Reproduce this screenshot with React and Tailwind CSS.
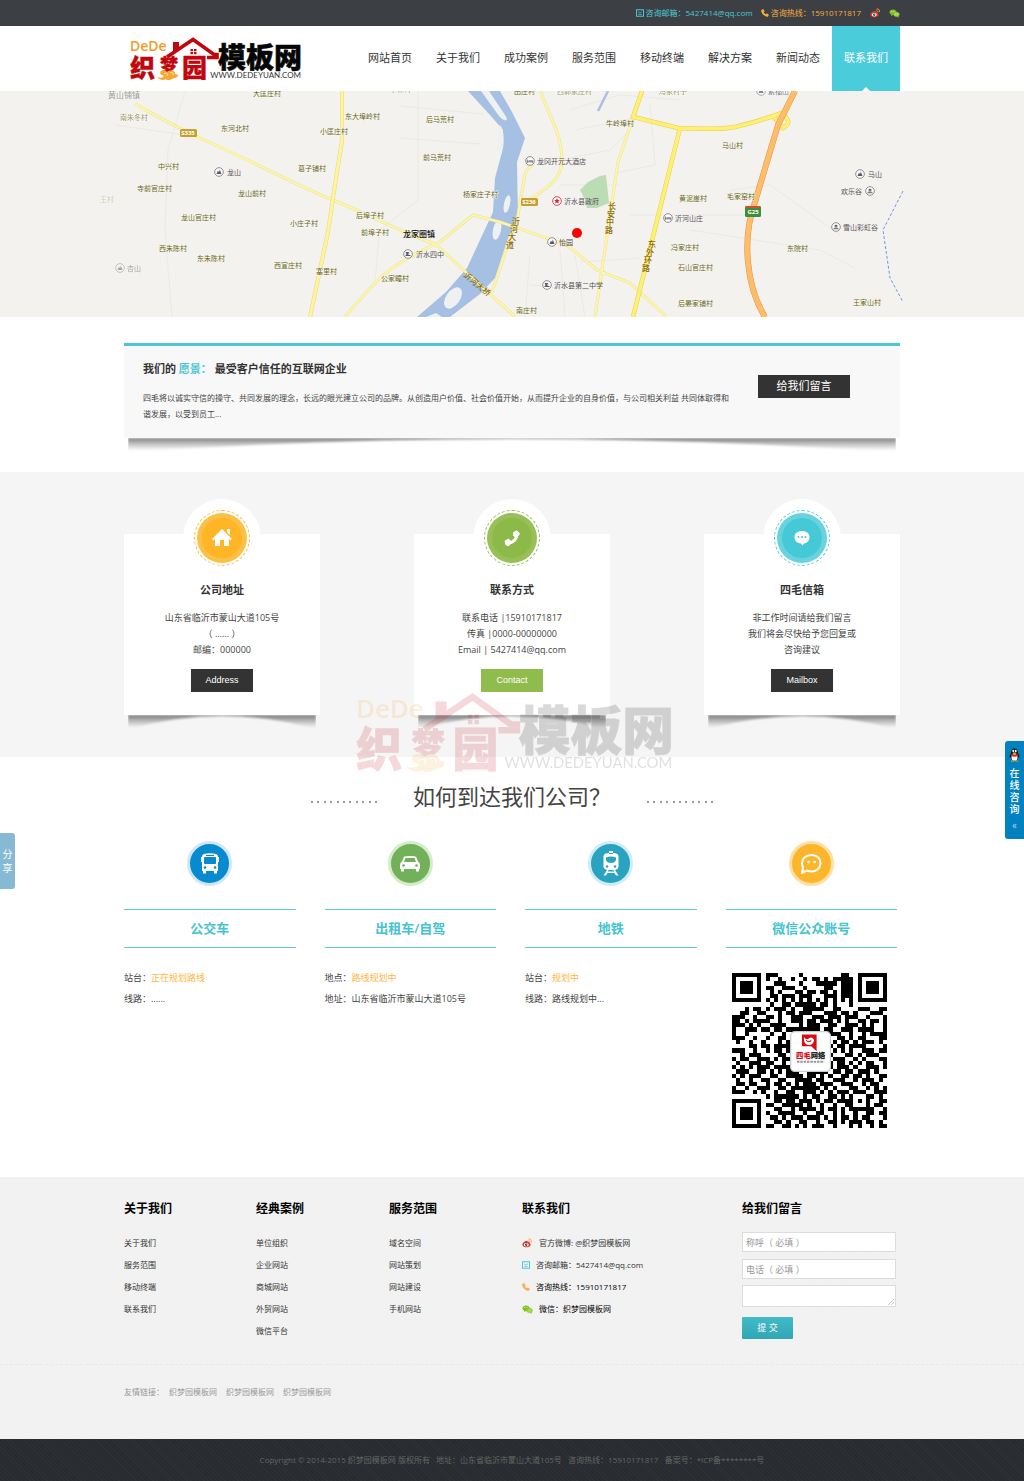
import React from "react";

const NAV = ["网站首页", "关于我们", "成功案例", "服务范围", "移动终端", "解决方案", "新闻动态", "联系我们"];

const QR_ROWS = [
  "1111111011100000100000000011001111111",
  "1000001010010010010110101111101000001",
  "1011101000111000100011111011101011101",
  "1011101011001110010000110011101011101",
  "1011101001010001101101101011101011101",
  "1000001001101110111000111011101000001",
  "1111111010101010101010101010101111111",
  "0000000001001101111101101000100000000",
  "0001011010111010011111001100001110011",
  "0011001100010110111000111011010001110",
  "1110010011010011100111011101110010001",
  "1101011110010011101101110101001101101",
  "1110101001111000101110011001110101001",
  "1001110110110111111110110011101111001",
  "1001000001001000100010111100100101111",
  "1110010010011001111001100110101100011",
  "0100100100010100000000001011010111010",
  "0000110110111100000000110110111100001",
  "1110010010110110000000001010100111011",
  "0010111000011010000000110001101011100",
  "1011001110101100000000101110010100011",
  "0100111011001000000000010110101011001",
  "1010101110111100000000110111010011101",
  "0111001101010111001111101101101110100",
  "1010111001100111101101010011011010011",
  "0100100110011001111011001110010111010",
  "0110110010110101011101110011100101100",
  "1001001110011011111110101000110010101",
  "1110010100100110011101010111011100111",
  "0000000010111111010110011010100011010",
  "1111111000110110111010110111101010011",
  "1000001011001111101001001001100010110",
  "1011101000110010111101011010111111001",
  "1011101010011110010011001010010011011",
  "1011101001101011101110101011010110001",
  "1000001000110100110010011010111011010",
  "1111111011001101010111001000101001011",
];

function Logo({ className }) {
  return (
    <svg className={className} viewBox="0 0 172 44" role="img" aria-label="织梦园模板网">
      <text x="0" y="14" fontSize="14" fontWeight="600" fill="#f39a2b" fontFamily="'Open Sans',sans-serif">DeDe</text>
      <g fill="#c0070d" stroke="#c0070d" strokeWidth=".4" fontFamily="'Noto Sans CJK SC',sans-serif" fontWeight="900">
        <text x="0" y="40" fontSize="25">织</text>
        <text x="30" y="35" fontSize="18">梦</text>
        <text x="52" y="40" fontSize="25">园</text>
      </g>
      <path d="M37 20 63 2.500 84 17.500H87V20.500H77" fill="none" stroke="#c0070d" strokeWidth="3.600" />
      <path d="M43 5h6v6l-6 4zM60.500 12h2.500v2.300h-2.500zm3.500 0h2.500v2.300h-2.500zm-3.500 3h2.500v2.300h-2.500zm3.500 0h2.500v2.300h-2.500z" fill="#c0070d" />
      <path d="M30 38c0-4 5-5 7-2 3-3 9-1 8 2 5 0 3 4-1 4-2 2-8 3-8 1-3 2-6 1-9-2 3 1 6 1 7-1" transform="translate(0 -1)" fill="#f7a82f" />
      <path d="M34 37c2-2 5 0 3 2m3-3c2-1 4 0 3 2" fill="none" stroke="#fff" strokeWidth=".7" />
      <text x="88" y="31" fontSize="28" fontWeight="900" fill="#060606" stroke="#060606" strokeWidth=".5" fontFamily="'Noto Sans CJK SC',sans-serif">模板网</text>
      <text x="171" y="41" textAnchor="end" fontSize="8" fill="#333" fontFamily="Lato,sans-serif">WWW.DEDEYUAN.COM</text>
    </svg>
  );
}

function PhoneIcon({ className }) {
  return (
    <svg className={className} viewBox="0 0 16 16" fill="currentColor" aria-hidden="true">
      <path d="M1 2 3.500.5Q4.500 0 5.200 1L7 4Q7.400 5 6.500 5.700L5.500 6.500Q7 9 9.500 10.500L10.300 9.500Q11 8.600 12 9L15 10.800Q16 11.500 15.500 12.500L14 15Q13 16 11 15.500 3 13 .5 5 0 3 1 2Z" />
    </svg>
  );
}

function MailIcon({ className }) {
  return (
    <svg className={className} viewBox="0 0 16 16" fill="none" stroke="#4bc8d5" strokeWidth="2" aria-hidden="true">
      <rect x="1" y="1.500" width="14" height="13" />
      <path d="M4 5.500 8 8l4-2.500M4.500 11h7" strokeWidth="1.500" />
    </svg>
  );
}

function WeiboIcon({ className }) {
  return (
    <svg className={className} viewBox="0 0 22 22" aria-hidden="true">
      <path d="M13 2c4-1 7 2 6 6M13 5.500c2-.5 3.500 1 3 3" fill="none" stroke="#f5a04a" strokeWidth="1.800" />
      <path d="M8 6c2-1 4 0 3 2 3-1 5 0 4 2 3 1 3 4 1 6-4 4-13 3-15-1-1-4 3-8 7-9z" fill="#dc3a20" />
      <ellipse cx="8.500" cy="13.500" rx="5" ry="3.400" fill="#fff" />
      <circle cx="8.500" cy="13.500" r="2.300" fill="#222" />
      <circle cx="9.500" cy="12.500" r=".8" fill="#fff" />
    </svg>
  );
}

function WechatIcon({ className }) {
  return (
    <svg className={className} viewBox="0 0 22 18" aria-hidden="true">
      <path d="M8 1c4 0 7 2 7 5.500S12 12 8 12l-4 2 .500-3C2 10 1 8.500 1 6.500 1 3 4 1 8 1z" fill="#7dc11d" />
      <path d="M15 6c3.500 0 6 2 6 4.500 0 1.500-1 3-2 3.700l.500 2.800-3-1.700C12 16 9 14 9 10.700 9 8 11.500 6 15 6z" fill="#9ad63b" stroke="#5f9f12" strokeWidth=".5" />
      <g fill="#fff"><circle cx="5.500" cy="5" r="1" /><circle cx="10" cy="5" r="1" /><circle cx="13" cy="10" r=".8" /><circle cx="17" cy="10" r=".8" /></g>
    </svg>
  );
}

const VILLAGES = [
  [253, 96, "大匡庄村"], [120, 120, "南朱冬村", 0.6], [221, 131, "东河北村"], [158, 169, "中兴村"], [137, 191, "寺前官庄村"],
  [238, 196, "龙山前村"], [181, 220, "龙山官庄村"], [159, 251, "西朱陈村"], [197, 261, "东朱陈村"], [345, 119, "东大埠岭村"],
  [320, 134, "小匡庄村"], [298, 171, "葛子铺村"], [290, 226, "小庄子村"], [274, 268, "西宣庄村"], [316, 274, "塞里村"],
  [426, 122, "后马荒村"], [423, 160, "前马荒村"], [463, 197, "杨家庄子村"], [356, 218, "后埠子村"], [361, 235, "前埠子村"],
  [381, 281, "公家疃村"], [514, 94, "田庄村"], [557, 94, "西郭家庄村", 0.6], [659, 94, "冯家村子", 0.6], [606, 126, "牛岭埠村"],
  [722, 148, "马山村"], [679, 201, "黄泥崖村"], [727, 199, "毛家窑村"], [671, 250, "冯家庄村"], [678, 270, "石山官庄村"],
  [787, 251, "东院村"], [678, 306, "后晏家铺村"], [516, 313, "南庄村"], [853, 305, "王家山村"], [390, 92, "小徐村", 0.4], [100, 202, "王村", 0.25],
];

const PLACES = [
  [219, 172, 227, "龙山", "hill"], [408, 254, 416, "沂水四中", "school"], [120, 268, 127, "杏山", "hill", 0.5], [530, 161, 537, "龙冈开元大酒店", "hotel"],
  [668, 218, 675, "沂河山庄", "hotel"], [547, 285, 554, "沂水县第二中学", "school"], [860, 174, 868, "马山", "hill"], [870, 191, 841, "欢乐谷", "sight"],
  [836, 227, 843, "雪山彩虹谷", "sight"], [552, 242, 559, "怡园", "hill"], [761, 91, 768, "紫福山", "hill", 0.7],
];

const PLACE_GLYPHS = {
  hill: "M-2.500 2-1-1.500 0 .3.800-2.500 2.500 2Z",
  school: "M-2.300-2H1.500L0-.3H2L-.5 1H2.500V2H-2.500V1L-.8-.2H-2Z",
  hotel: "M-2.700-1.500V1.800M-2.700.8H2.700V1.800M-1.500-.2H2.700V.8",
  sight: "M0-2.600 2-1H-2ZM-1.500-.7H1.500V.6H-1.500ZM-2.500 1.200H2.500V2.200H-2.500Z",
};

function TownMap() {
  return (
    <svg
      className="block h-[226px] w-full"
      viewBox="0 91 1024 226"
      preserveAspectRatio="xMidYMid slice"
      fontFamily="'Noto Sans CJK SC',sans-serif"
      fontSize="7"
      role="img"
      aria-label="公司位置地图"
    >
      <rect x="0" y="91" width="1024" height="226" fill="#f4f2ee" />
      <g fill="none" stroke="#ebe9e4" strokeWidth="1">
        <path d="M185 91 168 150 165 230 172 317M418 91V200L380 230 375 280M400 106l84 8M400 138l80 6M115 125l70 10 M570 110l50-15 60 5M575 130l60-12M560 160l50-10 20-20M560 185h60M580 262l60-4M630 215h120M690 230l130 20 35 18M530 255l-5 62M560 250l5 67M575 255l10 62M530 285l60 5M840 235l-70-50-40 5M650 105l5 60-40 8" />
      </g>
      <path d="M468 91 490 115 503 130 502 152 495 178 493 212 467 268 446 292 417 317H450L480 294 495 278 508 238 518 218 517 162 525 138 512 112 500 91Z" fill="#a5c0e2" />
      <g fill="#eef1f0">
        <path d="M481 91h8l16 24c5 7-1 7-6 1zM500 125c5 5 5 24 0 32-3-10-3-20 0-32z" />
        <ellipse cx="507" cy="204" rx="3" ry="9" transform="rotate(12 507 204)" />
        <ellipse cx="497" cy="230" rx="4" ry="10" transform="rotate(12 497 230)" />
        <ellipse cx="453" cy="298" rx="7" ry="12" transform="rotate(35 453 298)" />
        <path d="M426 317l10-4 6 4z" />
      </g>
      <path d="M580 190 588 182 600 176 606 175 609 203 597 208 587 208 585 200Z" fill="#bcdcb4" />
      <path d="M608 91 598 111" stroke="#a9bfe4" strokeWidth="2.500" />
      {[["#e8e2a6", 3], ["#fdf6a3", 2]].map(([color, width]) => (
        <g key={color} fill="none" stroke={color} strokeWidth={width}>
          <path d="M135 104C150 112 170 125 215 145S300 187 333 200 395 230 435 244L480 285 512 314M500 222 473 215 440 242Q395 262 376 282T345 317M540 91 550 115Q562 140 562 160C562 180 545 190 525 202M533 165Q525 168 524 180L518 215 492 292M500 222 567 245 597 270 630 283 667 317M642 91 633 118 618 162 610 215 595 317M500 302 515 317" />
        </g>
      ))}
      <path d="M342 91V141L336 178 328 232 310 317" fill="none" stroke="#e5d982" strokeWidth="4" />
      <path d="M342 91V141L336 178 328 232 310 317" fill="none" stroke="#fff39c" strokeWidth="3" />
      {[["#e3cf54", 5], ["#ffef72", 4]].map(([color, width]) => (
        <path key={color} d="M642 91 633 117 678 128Q720 130 735 127T782 113M773 116l10 12c8-4 6-10-2-14M680 128 633 317" fill="none" stroke={color} strokeWidth={width - 0.5} />
      ))}
      <path d="M795 91 778 125 755 202Q745 230 748 262T765 317" fill="none" stroke="#dc9646" strokeWidth="6" />
      <path d="M795 91 778 125 755 202Q745 230 748 262T765 317" fill="none" stroke="#ffbd69" strokeWidth="5" />
      <path d="M903 191 883 230 890 278 903 302" fill="none" stroke="#7395e4" strokeDasharray="3 2" />
      <g fill="#66641a" stroke="#f9f8f2" strokeWidth="1" paintOrder="stroke">
        {VILLAGES.map(([x, y, name, opacity = 1]) => (
          <text key={name} x={x} y={y} opacity={opacity}>{name}</text>
        ))}
      </g>
      {PLACES.map(([cx, cy, x, name, kind, opacity = 1]) => (
        <g key={name} opacity={opacity}>
          <circle cx={cx} cy={cy} r="4.300" fill="#fff" stroke="#736e76" strokeWidth=".8" />
          <path
            d={PLACE_GLYPHS[kind]}
            transform={`translate(${cx} ${cy})`}
            fill={kind === "hotel" ? "none" : "#5c5860"}
            stroke={kind === "hotel" ? "#5c5860" : "none"}
            strokeWidth=".8"
          />
          <text x={x} y={cy + 3} fill="#555058">{name}</text>
        </g>
      ))}
      <circle cx="557" cy="201" r="4.300" fill="#fff" stroke="#cf4853" />
      <path d="m557 198 .8 2 2 .2-1.500 1.300.5 2-1.800-1-1.800 1 .5-2-1.500-1.300 2-.2z" fill="#cf2739" />
      <text x="564" y="204" fill="#555058">沂水县政府</text>
      <text x="108" y="98" fontSize="8" fill="#888" opacity=".8">黄山铺镇</text>
      <text x="403" y="237" fontSize="8" fontWeight="500" fill="#111">龙家圈镇</text>
      <g fill="#8b6b0c" fontWeight="500" fontSize="8">
        <text transform="translate(463 276) rotate(40)">沂河大桥</text>
        {["长", "安", "中", "路"].map((c, i) => <text key={c} x={608 - i} y={209 + i * 8}>{c}</text>)}
        {["东", "外", "环", "路"].map((c, i) => <text key={c} x={648 - i * 2} y={247 + i * 8}>{c}</text>)}
        {["沂", "河", "大", "道"].map((c, i) => <text key={c} x={512 - i * 2} y={224 + i * 8}>{c}</text>)}
      </g>
      <g fontSize="6" fontWeight="700" fill="#fff" textAnchor="middle" fontFamily="'Open Sans',sans-serif">
        <rect x="180" y="129" width="17" height="8" rx="1.500" fill="#c4a02e" /><text x="188" y="135">S335</text>
        <rect x="521" y="198" width="17" height="8" rx="1.500" fill="#c4a02e" /><text x="529" y="204">S236</text>
        <rect x="745" y="206" width="16" height="11" rx="1.500" fill="#3c8f3c" /><path d="M745 208q0-2 2-2h12q2 0 2 2z" fill="#d2502e" /><text x="753" y="214">G25</text>
      </g>
      <circle cx="577" cy="233" r="5" fill="#f00" />
    </svg>
  );
}

function CurvedShadow() {
  return (
    <div className="pointer-events-none absolute inset-x-1 top-full h-4 overflow-hidden">
      <svg className="block h-4 w-full blur-[1px]" viewBox="0 0 100 16" preserveAspectRatio="none" aria-hidden="true">
        <defs>
          <linearGradient id="shadow-fade" x1="0" y1="0" x2="0" y2="1">
            <stop offset="0" stopColor="#000" stopOpacity=".5" />
            <stop offset=".4" stopColor="#000" stopOpacity=".25" />
            <stop offset=".9" stopColor="#000" stopOpacity="0" />
          </linearGradient>
        </defs>
        <path d="M0 0H100V14Q50 -12 0 14Z" fill="url(#shadow-fade)" />
      </svg>
    </div>
  );
}

const CARDS = [
  {
    title: "公司地址", lines: ["山东省临沂市蒙山大道105号", "（ ...... ）", "邮编：000000"], button: "Address",
    buttonClass: "bg-[#333333]", ring: "border-[#ffb92e]", outer: "bg-[#fcc046]", inner: "bg-[#ffb526]",
    icon: (
      <svg className="h-5 w-5" viewBox="0 0 20 20" fill="#fff" aria-hidden="true"><path d="M10 1 20 11 18.500 12.500 17 11V18H12V12H8V18H3V11L1.500 12.500 0 11ZM15 1H18V7L15 4Z" /></svg>
    ),
  },
  {
    title: "联系方式", lines: ["联系电话 |15910171817", "传真 |0000-00000000", "Email | 5427414@qq.com"], button: "Contact",
    buttonClass: "bg-[#90bc4d]", ring: "border-[#90bc4d]", outer: "bg-[#97c157]", inner: "bg-[#8cb947]",
    icon: (
      <svg className="h-4 w-4" viewBox="0 0 16 16" aria-hidden="true"><path d="M13 4C13 9 9 13 4 13" fill="none" stroke="#fff" strokeWidth="3" strokeLinecap="round" /><path d="M9.500 2.500 13 .8l2.500 3-3 4-2.800-2zM1 11l3.500-2 3 3L5 15.500l-3-.5z" fill="#fff" stroke="#fff" strokeLinejoin="round" /></svg>
    ),
  },
  {
    title: "四毛信箱", lines: ["非工作时间请给我们留言", "我们将会尽快给予您回复或", "咨询建议"], button: "Mailbox",
    buttonClass: "bg-[#333333]", ring: "border-[#4bcbd8]", outer: "bg-[#68d3de]", inner: "bg-[#46c9d7]",
    icon: (
      <svg className="h-4 w-4" viewBox="0 0 16 16" aria-hidden="true"><path d="M8 1c4.500 0 7.500 2.500 7.500 6S13 13 10 13.500L8.500 15.500 7 13.500C3 13 .500 10.500.500 7S3.500 1 8 1z" fill="#fff" /><g fill="#46c9d7"><circle cx="4.500" cy="7" r="1" /><circle cx="8" cy="7" r="1" /><circle cx="11.500" cy="7" r="1" /></g></svg>
    ),
  },
];

function BusIcon() {
  return (
    <svg className="h-[22px] w-[22px]" viewBox="0 0 22 22" aria-hidden="true">
      <path d="M5 1Q11-.5 17 1 19 1.500 19 4H20V9H19V18H18V20.500H15V18H7V20.500H4V18H3V9H2V4H3Q3 1.500 5 1Z" fill="#fff" />
      <path d="M7 2.500H15M5.500 4.500H16.500V10.500H5.500Z" fill="#078ad0" stroke="#078ad0" strokeWidth="1" />
      <circle cx="6" cy="14.500" r="1.300" fill="#078ad0" /><circle cx="16" cy="14.500" r="1.300" fill="#078ad0" />
    </svg>
  );
}

function CarIcon() {
  return (
    <svg className="h-[22px] w-[22px]" viewBox="0 0 22 22" aria-hidden="true">
      <path d="M5 3.500Q11 2.500 17 3.500L19 8.500Q21 9.500 21 12V16H20V18.500H17V16H5V18.500H2V16H1V12Q1 9.500 3 8.500Z" fill="#fff" />
      <path d="M6.500 5H15.500L17 9H5Z" fill="#72b05a" /><circle cx="4.500" cy="12.500" r="1.300" fill="#72b05a" /><circle cx="17.500" cy="12.500" r="1.300" fill="#72b05a" />
    </svg>
  );
}

function TrainIcon() {
  return (
    <svg className="h-[26px] w-[22px]" viewBox="0 0 22 26" aria-hidden="true">
      <path d="M9 0H13V2Q18 2 18.500 5V16Q18 18.500 15 19L18.500 24.500H16L14.500 22H7.500L6 24.500H3.500L7 19Q4 18.500 3.500 16V5Q4 2 9 2Z" fill="#fff" />
      <path d="M6 6.500Q11 4.500 16 6.500V9Q15 12 11 12T6 9ZM8.500 19H13.500L14.200 20.500H7.800Z" fill="#2aa3c1" /><circle cx="7" cy="15.500" r="1.200" fill="#2aa3c1" /><circle cx="15" cy="15.500" r="1.200" fill="#2aa3c1" /><path d="M9 2.500h4" stroke="#2aa3c1" />
    </svg>
  );
}

function ChatIcon() {
  return (
    <svg className="h-[22px] w-[22px]" viewBox="0 0 22 22" aria-hidden="true">
      <path d="M11.500 2C17 2 20.500 5.500 20.500 10S17 18.500 11.500 18.500Q9 18.500 7 17.500L2 20 3 14.500Q2 12.500 2 10C2 5.500 6 2 11.500 2Z" fill="none" stroke="#fff" strokeWidth="2" strokeLinejoin="round" />
      <circle cx="8.500" cy="9" r="1.300" fill="#fff" /><circle cx="14.500" cy="9" r="1.300" fill="#fff" />
    </svg>
  );
}

const ROUTES = [
  { title: "公交车", Icon: BusIcon, color: "border-[#cfe8f8] bg-[#078ad0]", rows: [["站台：", "正在规划路线"], ["线路：......"]] },
  { title: "出租车/自驾", Icon: CarIcon, color: "border-[#d3edca] bg-[#72b05a]", rows: [["地点：", "路线规划中"], ["地址：山东省临沂市蒙山大道105号"]] },
  { title: "地铁", Icon: TrainIcon, color: "border-[#cdedf7] bg-[#2aa3c1]", rows: [["站台：", "规划中"], ["线路：路线规划中..."]] },
  { title: "微信公众账号", Icon: ChatIcon, color: "border-[#fce0a3] bg-[#fdb52b]", rows: [] },
];

function QrCode() {
  return (
    <svg className="mt-[25px] ml-[6px] block h-[155px] w-[155px]" viewBox="0 0 37 37" role="img" aria-label="微信二维码">
      <path
        shapeRendering="crispEdges"
        d={QR_ROWS.flatMap((row, y) => [...row].map((cell, x) => (cell === "1" ? `M${x} ${y}h1v1h-1z` : ""))).join("")}
      />
      <rect x="14" y="14" width="9.500" height="9.500" rx="1" fill="#fff" stroke="#c9cdd1" strokeWidth=".3" />
      <path d="M16.700 14.700h3.500v4l-1.300-1.200h-2.200z" fill="#d80d18" />
      <path d="M17.200 15.300q.5.900 1.200.3t1.200.4q-.2 1.200-1.200 1.200t-1.200-1z" fill="#fff" /><path d="M17.700 16q.6.800 1.200.1" fill="none" stroke="#d80d18" strokeWidth=".25" />
      <text x="15.300" y="20.300" fontSize="1.750" fontWeight="900" fontFamily="'Noto Sans CJK SC',sans-serif" fill="#d80d18">四毛<tspan fill="#222">网络</tspan></text>
      <path d="M15.500 21.200h6.500" stroke="#999" strokeWidth=".5" strokeDasharray=".6 .2" />
    </svg>
  );
}

function Dots() {
  return (
    <span className="mt-3 flex w-[66px] justify-between" aria-hidden="true">
      {Array.from({ length: 11 }, (_, i) => <i key={i} className="h-[2px] w-[2px] rounded-full bg-[#777777]" />)}
    </span>
  );
}

const FOOTER_LISTS = [
  ["关于我们", ["关于我们", "服务范围", "移动终端", "联系我们"]],
  ["经典案例", ["单位组织", "企业网站", "商城网站", "外贸网站", "微信平台"]],
  ["服务范围", ["域名空间", "网站策划", "网站建设", "手机网站"]],
];

export default function App() {
  return (
    <div className="relative overflow-hidden bg-white font-['Open_Sans','Noto_Sans_CJK_SC',sans-serif] text-[9px] text-[#444444]">
      <div className="bg-[#3c3f44]">
        <div className="mx-auto flex h-[26px] max-w-[776px] items-center justify-end text-[8px]">
          <a href="#mail" className="flex items-center gap-[2px] text-[#4bc8d5]"><MailIcon className="h-2 w-2" />咨询邮箱：5427414@qq.com</a>
          <a href="#tel" className="ml-2 flex items-center gap-[2px] text-[#f9ac3b]"><PhoneIcon className="h-2 w-2" />咨询热线：15910171817</a>
          <a href="#weibo" aria-label="微博" className="ml-[9px]"><WeiboIcon className="h-[11px] w-[11px]" /></a>
          <a href="#wechat" aria-label="微信" className="ml-2"><WechatIcon className="h-[9px] w-[11px]" /></a>
        </div>
      </div>

      <header className="mx-auto flex h-[65px] max-w-[776px] items-center justify-between">
        <a href="#home" className="ml-[6px]"><Logo className="h-11 w-[172px]" /></a>
        <nav className="flex h-full text-[11px]">
          {NAV.map((item, i) => (
            <a
              key={item}
              href={`#nav-${i}`}
              className={
                i === 7
                  ? "relative flex w-[68px] items-center justify-center bg-[#4bccda] text-white after:absolute after:bottom-0 after:border-x-4 after:border-b-4 after:border-x-transparent after:border-b-white"
                  : "flex w-[68px] items-center justify-center text-[#333333]"
              }
            >
              {item}
            </a>
          ))}
        </nav>
      </header>

      <TownMap />

      <main>
        <section className="pt-[26px] pb-[34px]">
          <div className="relative mx-auto flex max-w-[776px] items-start justify-between border-t-3 border-[#4bc8d2] bg-[#f8f8f8] pt-[13px] pr-[50px] pb-4 pl-[19px]">
            <div className="w-[594px]">
              <h2 className="text-[11px] leading-5 font-bold text-[#333333]">我们的 <span className="text-[#4bc8d5]">愿景：</span> 最受客户信任的互联网企业</h2>
              <p className="mt-[11px] text-[8px] leading-4">四毛将以诚实守信的操守、共同发展的理念，长远的眼光建立公司的品牌。从创造用户价值、社会价值开始，从而提升企业的自身价值，与公司相关利益 共同体取得和<br />谐发展，以受到员工...</p>
            </div>
            <button className="mt-4 h-[23px] w-[92px] bg-[#333333] text-[11px] text-white">给我们留言</button>
            <CurvedShadow />
          </div>
        </section>

        <section className="bg-[#f5f5f5] pt-[62px] pb-[42px]">
          <div className="mx-auto flex max-w-[776px] justify-between">
            {CARDS.map((card) => (
              <article key={card.title} className="relative flex w-[196px] flex-col items-center bg-white pt-[46px] pb-[23px] text-center">
                <div className="absolute -top-[35px] flex h-[78px] w-[78px] items-center justify-center rounded-full bg-white">
                  <div className={`flex h-14 w-14 items-center justify-center rounded-full border border-dashed ${card.ring}`}>
                    <div className={`flex h-[50px] w-[50px] items-center justify-center rounded-full ${card.outer}`}>
                      <div className={`flex h-10 w-10 items-center justify-center rounded-full ${card.inner}`}>{card.icon}</div>
                    </div>
                  </div>
                </div>
                <h3 className="text-[11px] leading-5 font-bold text-[#333333]">{card.title}</h3>
                <p className="mt-[10px] leading-4">
                  {card.lines.map((line) => <span key={line} className="block">{line}</span>)}
                </p>
                <button className={`mt-[11px] h-[23px] w-[62px] font-['Liberation_Sans',Arial,sans-serif] text-white ${card.buttonClass}`}>{card.button}</button>
                <CurvedShadow />
              </article>
            ))}
          </div>
        </section>

        <section className="mx-auto max-w-[776px] pt-[21px] pb-[49px]">
          <div className="flex items-center justify-center gap-9">
            <Dots />
            <h2 className="text-[22px] leading-9">如何到达我们公司？</h2>
            <Dots />
          </div>
          <div className="mt-[27px] grid grid-cols-4 gap-x-[29px] pr-[3px]">
            {ROUTES.map(({ title, Icon, color, rows }) => (
              <div key={title}>
                <div className={`mx-auto flex h-[45px] w-[45px] items-center justify-center rounded-full border-[3px] ${color}`}><Icon /></div>
                <h3 className="mt-[23px] border-y border-[#5acbd3] text-center text-[13px] leading-[37px] font-semibold text-[#45c3cf]">{title}</h3>
                {rows.length > 0 ? (
                  <div className="mt-[19px] leading-[21px]">
                    {rows.map(([label, value]) => <p key={label}>{label}<span className="text-[#ffb63f]">{value}</span></p>)}
                  </div>
                ) : (
                  <QrCode />
                )}
              </div>
            ))}
          </div>
        </section>
      </main>

      <footer>
        <div className="bg-[#f2f2f2] bg-[repeating-linear-gradient(45deg,#f3f3f3_0_1px,#f1f1f1_1px_3px)] pt-[22px]">
          <div className="mx-auto grid max-w-[776px] grid-cols-[132px_133px_133px_220px_154px] text-[8px] text-[#333333]">
            {FOOTER_LISTS.map(([title, links]) => (
              <div key={title}>
                <h4 className="text-[12px] leading-5 font-bold text-black">{title}</h4>
                <ul className="mt-[13px] leading-[22px]">
                  {links.map((link) => <li key={link}><a href={`#${link}`}>{link}</a></li>)}
                </ul>
              </div>
            ))}
            <div>
              <h4 className="text-[12px] leading-5 font-bold text-black">联系我们</h4>
              <ul className="mt-[13px] leading-[22px]">
                <li><a href="#weibo" className="flex items-center gap-[6px]"><WeiboIcon className="h-[11px] w-[11px]" />官方微博: @织梦园模板网</a></li>
                <li><a href="#mail" className="flex items-center gap-[6px]"><MailIcon className="h-2 w-2" />咨询邮箱：5427414@qq.com</a></li>
                <li><a href="#tel" className="flex items-center gap-[6px] text-black"><PhoneIcon className="h-2 w-2 text-[#f9ac4b]" />咨询热线：15910171817</a></li>
                <li><a href="#wechat" className="flex items-center gap-[6px] text-black"><WechatIcon className="h-[9px] w-[11px]" />微信：织梦园模板网</a></li>
              </ul>
            </div>
            <div>
              <h4 className="text-[12px] leading-5 font-bold text-black">给我们留言</h4>
              <form className="mt-[13px] flex flex-col items-start text-[9px]">
                <input aria-label="称呼" placeholder="称呼（ 必填 ）" className="h-5 w-full border border-[#dcdcdc] bg-white px-[3px] placeholder:text-[#999999]" />
                <input aria-label="电话" placeholder="电话（ 必填 ）" className="mt-[7px] h-5 w-full border border-[#dcdcdc] bg-white px-[3px] placeholder:text-[#999999]" />
                <div className="relative mt-[6px] flex w-full">
                  <textarea aria-label="留言内容" rows={1} className="h-[22px] w-full resize-none border border-[#dcdcdc] bg-white px-[3px]" />
                  <svg className="absolute right-[2px] bottom-[2px] h-[6px] w-[6px]" viewBox="0 0 6 6" stroke="#ccc" aria-hidden="true"><path d="M0 6 6 0M3 6 6 3" /></svg>
                </div>
                <button type="button" className="mt-[10px] h-[22px] w-[51px] rounded-[1px] bg-linear-to-b from-[#43bac6] to-[#2ea7b5] text-white">提 交</button>
              </form>
            </div>
          </div>
          <div className="mt-[22px] border-t border-dashed border-[#e9e9e9] pt-4 pb-9">
            <div className="mx-auto flex max-w-[776px] gap-[9px] text-[8px] leading-[22px] text-[#999999]">
              <span className="-mr-1">友情链接：</span>
              <a href="#link-1">织梦园模板网</a>
              <a href="#link-2">织梦园模板网</a>
              <a href="#link-3">织梦园模板网</a>
            </div>
          </div>
        </div>
        <p className="bg-[#2a2d31] bg-[repeating-linear-gradient(45deg,#2d3034_0_1px,#282b2f_1px_3px)] text-center text-[8px] leading-[42px] whitespace-pre text-[#666666]">Copyright © 2014-2015 织梦园模板网 版权所有   地址：山东省临沂市蒙山大道105号   咨询热线：15910171817   备案号：*ICP备********号</p>
      </footer>

      <Logo className="pointer-events-none absolute top-[692px] left-[calc(50%-156px)] h-[82px] w-[318px] opacity-15" />

      <button className="absolute top-[833px] left-0 w-[15px] rounded-r-[3px] bg-[#86b9d3] py-[14px] text-[10px] leading-[14px] text-white">分享</button>
      <button className="absolute top-[741px] right-0 flex h-[98px] w-[19px] flex-col items-center rounded-l-[3px] bg-[#0281c0] pt-[7px] text-[10px] leading-3 font-medium text-white">
        <svg className="mb-[5px] h-[14px] w-[11px] shrink-0" viewBox="0 0 22 28" aria-hidden="true">
          <path d="M11 1c5 0 7 4 7 9l3 6-1 4-2-2v4l-3 4H7l-3-4v-4l-2 2-1-4 3-6c0-5 2-9 7-9z" fill="#1a1a1a" />
          <ellipse cx="11" cy="19" rx="6" ry="6.500" fill="#fff" /><path d="M4 12q7 4 14 0v4q-7 3-14 0z" fill="#e0231c" />
          <ellipse cx="8.500" cy="6" rx="1.800" ry="2.500" fill="#fff" /><ellipse cx="13.500" cy="6" rx="1.800" ry="2.500" fill="#fff" />
          <ellipse cx="11" cy="10.500" rx="4" ry="1.500" fill="#f6b21b" /><path d="M4 25h6v2H4zm8 0h6v2h-6z" fill="#f6b21b" />
        </svg>
        {[..."在线咨询"].map((c) => <span key={c}>{c}</span>)}
        <span className="mt-1 font-light">«</span>
      </button>
    </div>
  );
}
